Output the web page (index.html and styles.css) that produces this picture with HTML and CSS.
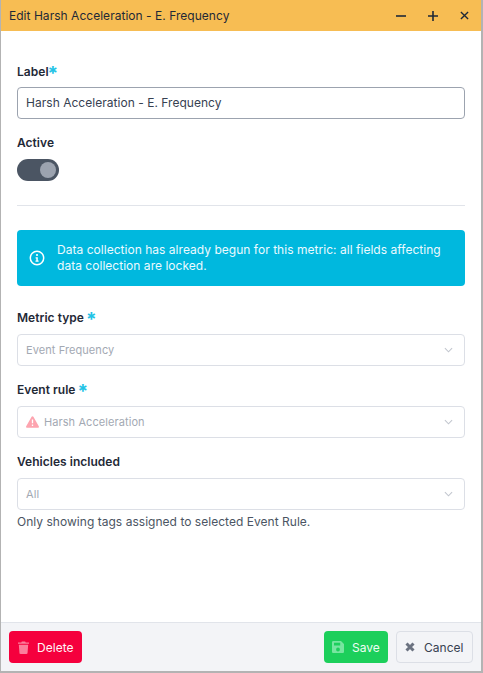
FILE: index.html

```html
<!DOCTYPE html>
<html lang="en">
<head>
	<meta charset="UTF-8">
	<title>Edit Harsh Acceleration - E. Frequency</title>
	<link rel="stylesheet" href="styles.css">
</head>
<body>
	<div class="window">
		<div class="title_bar">
			<span class="title">Edit Harsh Acceleration - E. Frequency</span>
			<div class="title_btns">
				<svg width="10" height="10" viewBox="0 0 10 10"><path d="M0 5H10" stroke="#1f2937" stroke-width="1.6"/></svg>
				<svg width="10" height="10" viewBox="0 0 10 10"><path d="M0 5H10M5 0V10" stroke="#1f2937" stroke-width="1.6"/></svg>
				<svg width="9" height="9" viewBox="0 0 10 10"><path d="M1 1L9 9M9 1L1 9" stroke="#1f2937" stroke-width="1.5"/></svg>
			</div>
		</div>
		<div class="content">
			<label class="field_label label_first">Label<span class="req">*</span></label>
			<div class="input">Harsh Acceleration - E. Frequency</div>
			<label class="field_label label_active">Active</label>
			<div class="toggle"><span class="knob"></span></div>
			<div class="divider"></div>
			<div class="alert">
				<svg class="alert_icon" width="16" height="16" viewBox="0 0 16 16"><circle cx="8" cy="8" r="6.7" fill="none" stroke="#fff" stroke-width="1.5"/><circle cx="8" cy="5" r="1.1" fill="#fff"/><path d="M6.6 7.2H8.8V10.6H9.6V11.8H6.5V10.6H7.3V8.4H6.6Z" fill="#fff"/></svg>
				<p>Data collection has already begun for this metric: all fields affecting data collection are locked.</p>
			</div>
			<label class="field_label label_metric">Metric type <span class="req">*</span></label>
			<div class="select">
				<span>Event Frequency</span>
				<svg class="chevron" width="9" height="6" viewBox="0 0 10 6"><path d="M1 1L5 5L9 1" fill="none" stroke="#c2c6ce" stroke-width="1.2"/></svg>
			</div>
			<label class="field_label label_next">Event rule <span class="req">*</span></label>
			<div class="select">
				<svg class="warn" width="13" height="12" viewBox="0 0 13 12"><path d="M6.5 0.3C6.9 0.3 7.2 0.5 7.4 0.8L12.8 10.3C13.2 11 12.7 11.8 11.9 11.8H1.1C0.3 11.8 -0.2 11 0.2 10.3L5.6 0.8C5.8 0.5 6.1 0.3 6.5 0.3Z" fill="#fda4af"/><path d="M6.5 3.6V7.2M6.5 8.6V10" stroke="#fff" stroke-width="1.3"/></svg>
				<span>Harsh Acceleration</span>
				<svg class="chevron" width="9" height="6" viewBox="0 0 10 6"><path d="M1 1L5 5L9 1" fill="none" stroke="#c2c6ce" stroke-width="1.2"/></svg>
			</div>
			<label class="field_label label_next">Vehicles included</label>
			<div class="select">
				<span>All</span>
				<svg class="chevron" width="9" height="6" viewBox="0 0 10 6"><path d="M1 1L5 5L9 1" fill="none" stroke="#c2c6ce" stroke-width="1.2"/></svg>
			</div>
			<p class="help">Only showing tags assigned to selected Event Rule.</p>
		</div>
		<div class="footer">
			<div class="btn btn_delete">
				<svg width="11" height="13" viewBox="0 0 12 14"><path d="M0 1.6H3.6L4.2 0.4H7.8L8.4 1.6H12V3H0ZM0.9 3.9H11.1L10.4 13C10.4 13.6 9.9 14 9.3 14H2.7C2.1 14 1.6 13.6 1.6 13Z" fill="#fb7f9c"/></svg>
				Delete
			</div>
			<div class="btn btn_save">
				<svg width="12" height="12" viewBox="0 0 12 12"><path fill-rule="evenodd" d="M1.3 0H9L12 3V10.7C12 11.4 11.4 12 10.7 12H1.3C0.6 12 0 11.4 0 10.7V1.3C0 0.6 0.6 0 1.3 0ZM2 1.7V4.6H8.2V1.7ZM6 6.6A1.9 1.9 0 1 0 6 10.4A1.9 1.9 0 1 0 6 6.6Z" fill="#77e5a0"/></svg>
				Save
			</div>
			<div class="btn btn_cancel">
				<svg width="10" height="10" viewBox="0 0 10 10"><path d="M1.5 1.5L8.5 8.5M8.5 1.5L1.5 8.5" stroke="#6b7280" stroke-width="3"/></svg>
				Cancel
			</div>
		</div>
	</div>
</body>
</html>
```

FILE: styles.css

```css
*{ margin:0; padding:0; box-sizing:border-box; }
html,body{ height:100%; overflow:hidden; }
body{ background:#b3b3b3; font-family:Inter,"Liberation Sans",sans-serif; font-size:12px; letter-spacing:.03px; color:#1f2937; padding:0 2px 2px 1px; }

.window{ height:100%; display:flex; flex-direction:column; background:#fff; }

.title_bar{ height:31px; flex:none; background:#f7bd53; display:flex; align-items:center; justify-content:space-between; padding:0 12px 0 8px; }
.title{ font-size:12px; color:#1f2937; }
.title_btns{ display:flex; gap:22px; align-items:center; }
.title_btns svg{ display:block; }

.content{ flex:1; padding:0 16px; }
.field_label{ display:block; font-size:12px; font-weight:600; color:#1f2937; line-height:16px; }
.label_first{ padding-top:33px; }
.label_active{ margin-top:16px; }
.label_metric{ margin-top:24px; }
.label_next{ margin-top:16px; }
.req{ color:#22c3e6; font-size:19px; font-weight:700; line-height:0; vertical-align:-4px; margin-left:-1px; }

.input{ height:32px; margin-top:7px; border:1px solid #9ca3af; border-radius:4px; padding:0 8px; line-height:30px; font-size:12px; color:#374151; }

.toggle{ width:42px; height:22px; margin-top:8px; border-radius:11px; background:#4b5563; position:relative; }
.knob{ position:absolute; top:3px; right:3px; width:16px; height:16px; border-radius:50%; background:#9ca3af; }

.divider{ height:1px; margin-top:24px; background:#e1e4ea; }

.alert{ height:56px; margin-top:24px; border-radius:4px; background:#00b8de; color:#ecfaff; display:flex; align-items:center; padding:0 12px; gap:12px; }
.alert_icon{ flex:none; }
.alert p{ font-size:12px; line-height:16px; }

.select{ height:32px; margin-top:8px; border:1px solid #dcdfe6; border-radius:4px; padding:0 8px; display:flex; align-items:center; font-size:11px; letter-spacing:.08px; color:#a3a9b3; }
.warn{ margin-right:5px; flex:none; }
.chevron{ margin-left:auto; margin-right:3px; }

.help{ margin-top:4px; font-size:12px; line-height:16px; color:#4b5563; }

.footer{ height:49px; flex:none; background:#f3f4f7; border-top:1px solid #e1e4ea; display:flex; align-items:flex-start; padding:8px 8px 0; gap:8px; }
.btn{ height:32px; border-radius:4px; display:flex; align-items:center; font-size:12px; padding:0 8px; gap:9px; }
.btn_delete{ width:73px; background:#f5003d; color:#fff5f7; margin-right:auto; padding-left:9px; gap:8px; }
.btn_save{ width:64px; background:#1ccf5b; color:#eefdf3; gap:8px; }
.btn_cancel{ width:77px; border:1px solid #dcdfe6; color:#374151; }
```
